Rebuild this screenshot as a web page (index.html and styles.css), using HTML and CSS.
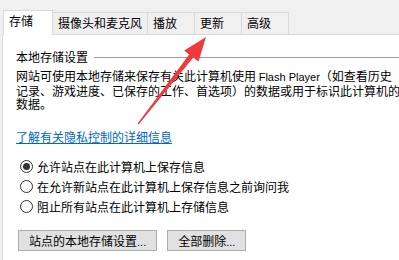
FILE: index.html
```html
<!DOCTYPE html>
<html lang="zh-CN">
<head>
<meta charset="utf-8">
<title>本地存储设置</title>
<link rel="stylesheet" href="styles.css">
</head>
<body>
<div class="window">
  <div class="tabs">
    <div class="tab active">存储</div>
    <div class="tab">摄像头和麦克风</div>
    <div class="tab">播放</div>
    <div class="tab">更新</div>
    <div class="tab">高级</div>
  </div>
  <div class="panel">
    <div class="group-title"><span>本地存储设置</span><span class="rule"></span></div>
    <p class="desc">网站可使用本地存储来保存有关此计算机使用 <span class="latin">Flash Player</span>（如查看历史<br>记录、游戏进度、已保存的工作、首选项）的数据或用于标识此计算机的<br>数据。</p>
    <a class="link" href="#">了解有关隐私控制的详细信息</a>
    <div class="options">
      <div class="option"><span class="radio checked"></span><span>允许站点在此计算机上保存信息</span></div>
      <div class="option"><span class="radio"></span><span>在允许新站点在此计算机上保存信息之前询问我</span></div>
      <div class="option"><span class="radio"></span><span>阻止所有站点在此计算机上存储信息</span></div>
    </div>
    <div class="buttons">
      <button class="btn">站点的本地存储设置<span class="latin">...</span></button>
      <button class="btn">全部删除<span class="latin">...</span></button>
    </div>
  </div>
  <svg class="arrow" width="399" height="260" viewBox="0 0 399 260">
    <polygon points="206,37 198.5,61.5 193.3,57.6 138.6,124.4 137.6,123.6 189.2,54.6 184.2,50.4" fill="#ee3a3a"/>
  </svg>
</div>
</body>
</html>
```
FILE: styles.css
```css
html, body {
  margin: 0;
  padding: 0;
}
body {
  background: #f0f0f0;
  font-family: "Noto Sans CJK SC", "Liberation Sans", sans-serif;
  font-size: 12px;
  color: #000;
  overflow: hidden;
}
.window {
  position: relative;
  width: 399px;
  height: 260px;
  overflow: hidden;
}
.tabs {
  display: flex;
  align-items: flex-end;
  height: 34px;
  padding-left: 3px;
  box-sizing: border-box;
}
.tab {
  box-sizing: border-box;
  height: 22px;
  min-width: 48px;
  padding: 0 5px;
  margin-left: -1px;
  border: 1px solid #d9d9d9;
  border-bottom: none;
  background: #f0f0f0;
  line-height: 19px;
  white-space: nowrap;
}
.tab.active {
  position: relative;
  z-index: 1;
  margin-left: 0;
  width: 50px;
  height: 25px;
  margin-bottom: -1px;
  background: #fff;
  line-height: 20px;
}
.panel {
  margin-left: 2px;
  border-left: 1px solid #d9d9d9;
  border-top: 1px solid #d9d9d9;
  background: #fff;
  height: 226px;
  padding: 15px 0 0 13px;
  box-sizing: border-box;
}
.group-title {
  display: flex;
  align-items: center;
  gap: 6px;
  line-height: 13px;
  height: 13px;
}
.rule {
  flex: 1;
  height: 1px;
  background: #a0a0a0;
  margin-top: 1px;
}
.desc {
  margin: 6px 0 0;
  line-height: 13px;
  white-space: nowrap;
}
.latin {
  font-family: "Liberation Sans", sans-serif;
  font-size: 11px;
}
.link {
  display: inline-block;
  margin-top: 20px;
  line-height: 13px;
  color: #0066cc;
  text-decoration: underline;
}
.options {
  margin-top: 11px;
  display: flex;
  flex-direction: column;
}
.option {
  display: flex;
  align-items: center;
  gap: 4px;
  height: 20px;
  padding-left: 4px;
  white-space: nowrap;
}
.radio {
  box-sizing: border-box;
  width: 13px;
  height: 13px;
  border: 1px solid #333;
  border-radius: 50%;
  background: #fff;
  display: flex;
  align-items: center;
  justify-content: center;
}
.radio.checked::after {
  content: "";
  width: 7px;
  height: 7px;
  border-radius: 50%;
  background: #333;
}
.buttons {
  display: flex;
  gap: 10px;
  margin-top: 14px;
  padding-left: 2px;
}
.btn {
  box-sizing: border-box;
  height: 21px;
  padding: 0 10px;
  border: 1px solid #adadad;
  background: #e1e1e1;
  font-family: inherit;
  font-size: 12px;
  line-height: 19px;
  color: #000;
  border-radius: 0;
  white-space: nowrap;
}
.arrow {
  position: absolute;
  top: 0;
  left: 0;
  pointer-events: none;
}
```
